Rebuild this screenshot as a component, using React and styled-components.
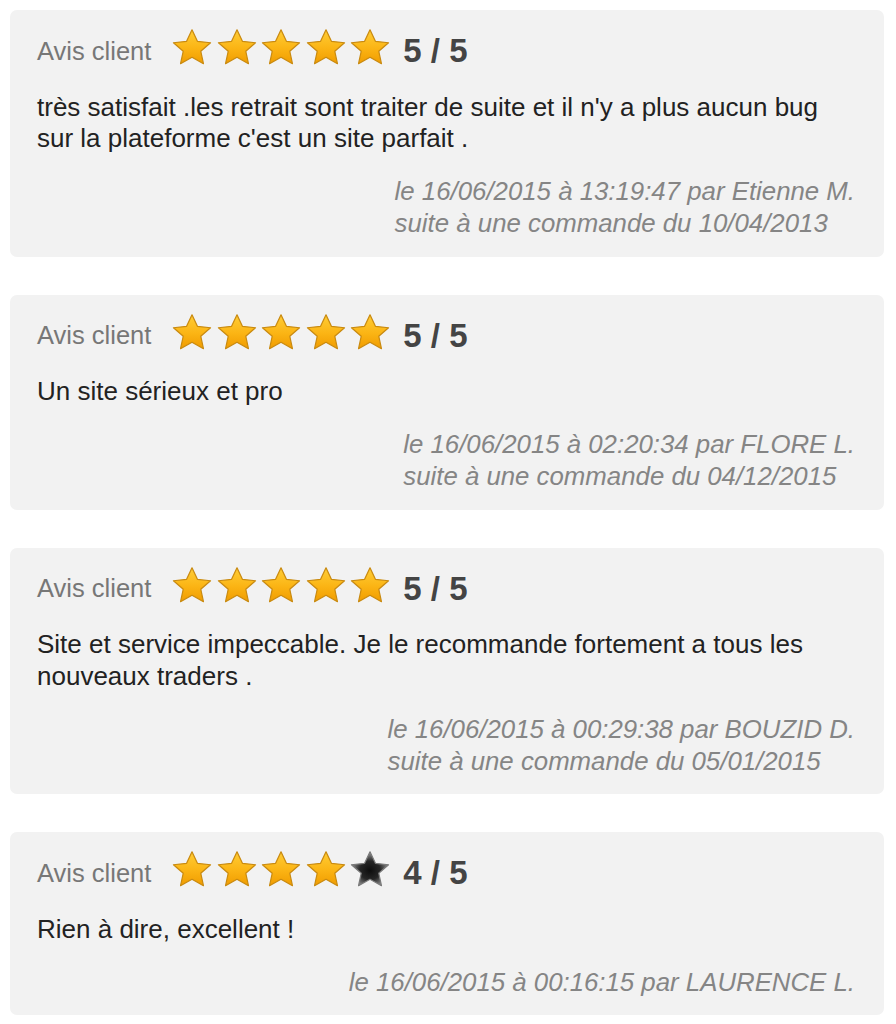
import React from 'react';
import styled, { createGlobalStyle } from 'styled-components';

const GlobalStyle = createGlobalStyle`
  body {
    margin: 0;
    background: #fff;
    font-family: "Liberation Sans", Arial, sans-serif;
  }
`;

const Page = styled.div`
  display: flex;
  flex-direction: column;
  gap: 38px;
  padding: 10px 12px 10px 10px;
`;

const Card = styled.div`
  background: #f2f2f2;
  border-radius: 7px;
  padding: 19px 29px 17.5px 27px;
`;

const Header = styled.div`
  display: flex;
  align-items: center;
  height: 36px;
`;

const Label = styled.span`
  color: #777;
  font-size: 25.5px;
  padding-top: 8px;
  margin-right: 21px;
`;

const Stars = styled.div`
  display: flex;
  gap: 4.5px;
  margin-right: 13px;
`;

const Score = styled.span`
  color: #444;
  font-size: 33px;
  font-weight: bold;
  padding-top: 8px;
`;

const Body = styled.p`
  margin: 26.5px 0 0;
  color: #222;
  font-size: 26px;
  line-height: 31.5px;
`;

const Footer = styled.div`
  display: flex;
  justify-content: flex-end;
  margin-top: 20.5px;
`;

const Meta = styled.div`
  color: #858585;
  font-size: 25.8px;
  font-style: italic;
  line-height: 32px;
`;

const starPoints = (() => {
  const pts = [];
  for (let i = 0; i < 10; i++) {
    const r = i % 2 === 0 ? 19.5 : 9.2;
    const a = (-90 + i * 36) * Math.PI / 180;
    pts.push(`${(20 + r * Math.cos(a)).toFixed(2)},${(20.3 + r * Math.sin(a)).toFixed(2)}`);
  }
  return pts.join(' ');
})();

const Star = ({ filled }) => (
  <svg width="40" height="36" viewBox="0 0 40 37.5" preserveAspectRatio="none">
    <defs>
      <linearGradient id="gold" x1="0" y1="0" x2="0" y2="1">
        <stop offset="0" stopColor="#ffcd36" />
        <stop offset="0.55" stopColor="#fbb414" />
        <stop offset="1" stopColor="#f09c00" />
      </linearGradient>
      <radialGradient id="dark" cx="0.5" cy="0.55" r="0.5">
        <stop offset="0" stopColor="#0d0d0d" />
        <stop offset="0.55" stopColor="#262626" />
        <stop offset="1" stopColor="#8a8a8a" />
      </radialGradient>
    </defs>
    <polygon
      points={starPoints}
      fill={filled ? 'url(#gold)' : 'url(#dark)'}
      stroke={filled ? '#c98a10' : '#7a7a7a'}
      strokeWidth="1.2"
      strokeLinejoin="round"
    />
  </svg>
);

const reviews = [
  {
    score: 5,
    text: "très satisfait .les retrait sont traiter de suite et il n'y a plus aucun bug sur la plateforme c'est un site parfait .",
    meta: 'le 16/06/2015 à 13:19:47 par Etienne M.',
    order: 'suite à une commande du 10/04/2013',
  },
  {
    score: 5,
    text: 'Un site sérieux et pro',
    meta: 'le 16/06/2015 à 02:20:34 par FLORE L.',
    order: 'suite à une commande du 04/12/2015',
  },
  {
    score: 5,
    text: 'Site et service impeccable. Je le recommande fortement a tous les nouveaux traders .',
    meta: 'le 16/06/2015 à 00:29:38 par BOUZID D.',
    order: 'suite à une commande du 05/01/2015',
  },
  {
    score: 4,
    text: 'Rien à dire, excellent !',
    meta: 'le 16/06/2015 à 00:16:15 par LAURENCE L.',
  },
];

const App = () => (
  <>
    <GlobalStyle />
    <Page>
      {reviews.map((r, i) => (
        <Card key={i}>
          <Header>
            <Label>Avis client</Label>
            <Stars>
              {[1, 2, 3, 4, 5].map((n) => (
                <Star key={n} filled={n <= r.score} />
              ))}
            </Stars>
            <Score>{r.score} / 5</Score>
          </Header>
          <Body>{r.text}</Body>
          <Footer>
            <Meta>
              {r.meta}
              {r.order && <br />}
              {r.order}
            </Meta>
          </Footer>
        </Card>
      ))}
    </Page>
  </>
);

export default App;
